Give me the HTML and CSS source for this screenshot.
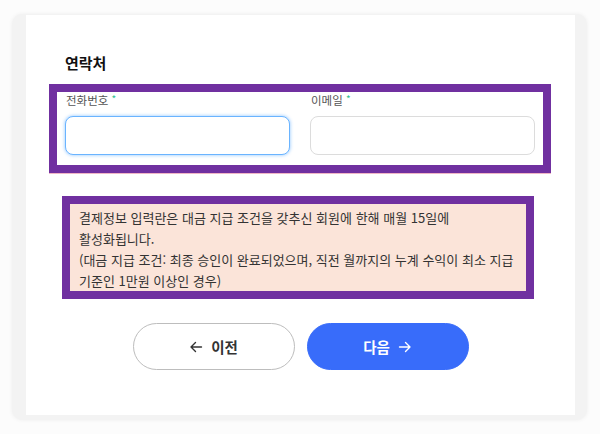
FILE: index.html
```html
<!DOCTYPE html>
<html lang="ko">
<head>
<meta charset="utf-8">
<link rel="stylesheet" href="styles.css">
</head>
<body>
<div class="frame">
  <div class="card">
    <h2 class="title">연락처</h2>
    <div class="mark fields">
      <div class="field">
        <label class="label">전화번호 <span class="req">*</span></label>
        <div class="input focused"></div>
      </div>
      <div class="field">
        <label class="label">이메일 <span class="req">*</span></label>
        <div class="input"></div>
      </div>
    </div>
    <div class="mark notice">
      <p class="notice-text">결제정보 입력란은 대금 지급 조건을 갖추신 회원에 한해 매월 15일에<br>활성화됩니다.<br>(대금 지급 조건: 최종 승인이 완료되었으며, 직전 월까지의 누계 수익이 최소 지급<br>기준인 1만원 이상인 경우)</p>
    </div>
    <div class="actions">
      <button class="btn btn-prev">
        <svg class="arrow" viewBox="0 0 14 14" width="14" height="14"><path d="M12.5 7H2M6.5 2.5L2 7l4.5 4.5" fill="none" stroke="currentColor" stroke-width="1.4" stroke-linecap="round" stroke-linejoin="round"/></svg>
        <span>이전</span>
      </button>
      <button class="btn btn-next">
        <span>다음</span>
        <svg class="arrow" viewBox="0 0 14 14" width="14" height="14"><path d="M1.5 7H12M7.5 2.5L12 7l-4.5 4.5" fill="none" stroke="currentColor" stroke-width="1.4" stroke-linecap="round" stroke-linejoin="round"/></svg>
      </button>
    </div>
  </div>
</div>
</body>
</html>
```

FILE: styles.css
```css
* { box-sizing: border-box; }
html, body { margin: 0; padding: 0; }
body {
  width: 600px;
  height: 434px;
  background: #fcfcfc;
  font-family: "Noto Sans CJK KR", "Noto Sans", sans-serif;
  color: #222;
  overflow: hidden;
  padding-top: 14px;
}
.frame {
  margin: 0 13px 0 12px;
  height: 406px;
  background: #f3f3f3;
  border-radius: 10px;
  padding: 1px 12px 5px 14px;
  box-shadow: 0 0 4px rgba(0,0,0,0.06);
}
.card {
  background: #fff;
  height: 400px;
  padding-top: 38px;
}
.title {
  margin: 0 0 0 39px;
  font-size: 15px;
  line-height: 20px;
  font-weight: 700;
  color: #111;
}
.mark {
  border: 8px solid #7030a0;
}
.fields {
  margin: 11px 24px 0 23px;
  padding: 0 8px 10px 8px;
  display: grid;
  grid-template-columns: 225px 225px;
  column-gap: 20px;
  box-shadow: 0 1px 0 #f0b6c6;
}
.field { display: flex; flex-direction: column; }
.label {
  margin-left: 1px;
  font-size: 11.5px;
  line-height: 14px;
  color: #555;
  height: 24px;
}
.req { color: #2fbf8f; font-size: 10px; vertical-align: 2px; }
.input {
  height: 39px;
  border: 1px solid #dcdcdc;
  border-radius: 8px;
  background: #fff;
}
.input.focused {
  border: 1.5px solid #6ab4ff;
  box-shadow: 0 0 3px 1px rgba(100,175,255,0.45);
}
.notice {
  margin: 23px 0 0 36px;
  width: 472px;
  background: #fbe4d9;
  padding: 3px 6px 0 9px;
  height: 103px;
}
.notice-text {
  margin: 0;
  font-size: 13px;
  line-height: 21px;
  color: #333;
  white-space: nowrap;
}
.actions {
  margin-top: 24px;
  display: flex;
  justify-content: center;
  gap: 12px;
}
.btn {
  width: 162px;
  height: 47px;
  border-radius: 24px;
  font-family: inherit;
  font-size: 14.5px;
  font-weight: 700;
  display: flex;
  align-items: center;
  justify-content: center;
  gap: 8px;
  padding: 0;
  cursor: pointer;
}
.btn-prev {
  background: #fff;
  border: 1px solid #bdbdbd;
  color: #333;
}
.btn-next {
  background: #386cfa;
  border: 1px solid #386cfa;
  color: #fff;
}
.arrow { display: block; }
```
